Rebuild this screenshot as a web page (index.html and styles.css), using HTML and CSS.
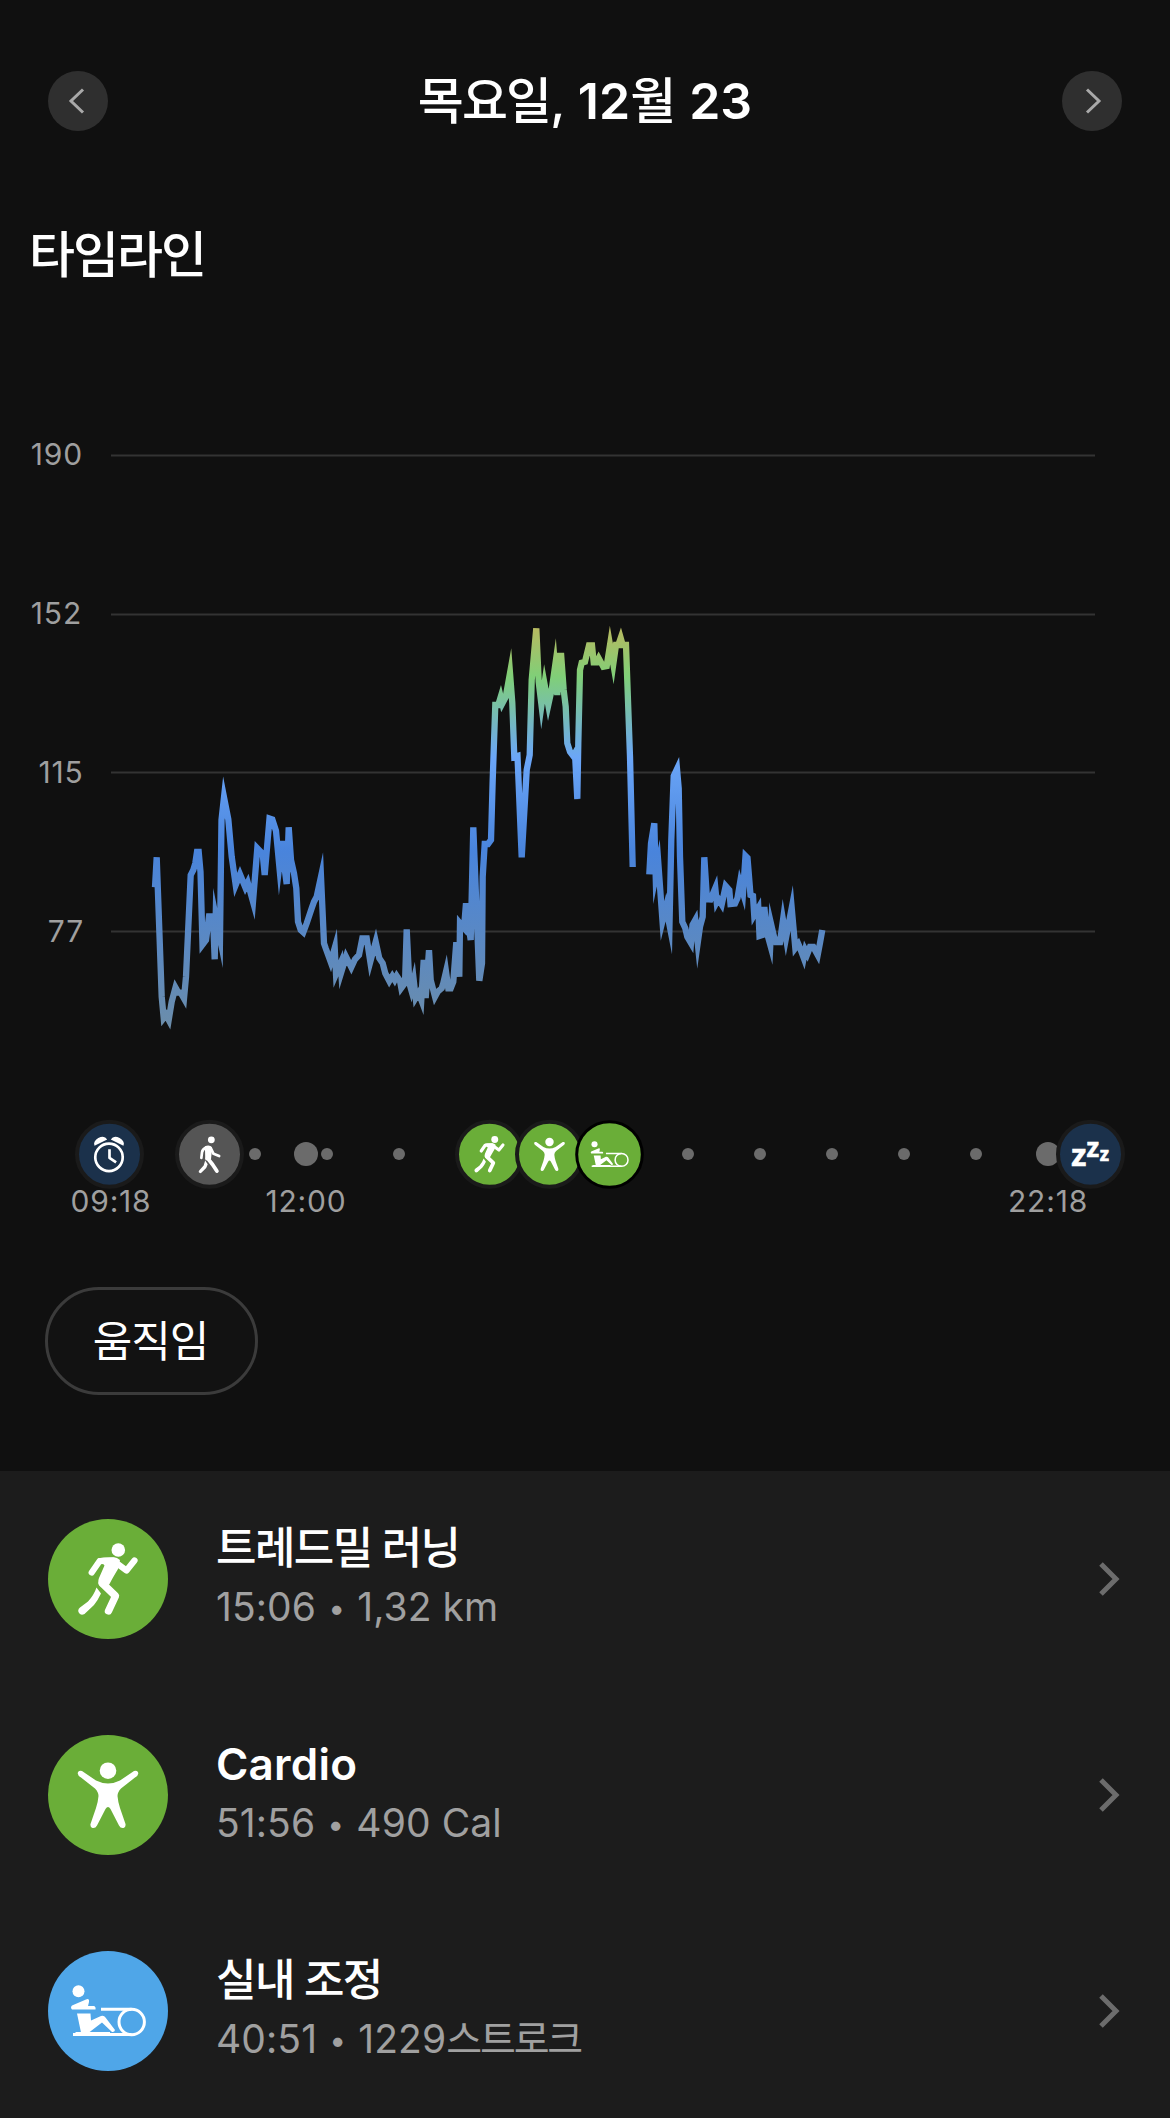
FILE: index.html
```html
<!DOCTYPE html>
<html lang="ko">
<head>
<meta charset="utf-8">
<meta name="viewport" content="width=device-width">
<title>타임라인</title>
<link rel="stylesheet" href="styles.css">
</head>
<body>
<svg class="sprite" aria-hidden="true">
  <symbol id="run" viewBox="0 0 120 120">
    <circle cx="70.3" cy="31" r="6.8"/>
    <path d="M50 39.5Q52 38.6 56 38.4L66 38.2Q69 38.4 72 41L70 50Q64 60 61.500 65Q57 71 52 67Q49 64 51 59L56.500 46.500Z"/>
    <path class="s6" d="M43.700 53.500L51.500 42.200L65 41.500L78.500 51.500L86.500 41.500"/>
    <path class="s7" d="M54.500 64.500L67.500 77L60.500 92"/>
    <path d="M48.500 68.500L53 74.500Q50 81 46 86L36.500 95Q33 97 31 94Q29 91 32 88.500L40 82.500Q46 76 48.500 68.500Z"/>
  </symbol>
  <symbol id="cardio" viewBox="0 0 120 120">
    <circle cx="60" cy="35.700" r="8.300"/>
    <path d="M34 36L48 45.500Q54 48.500 60 48.500Q66 48.500 72 45.500L86 36Q90 35 90.300 38.500Q90 41 87 42.500L73 53.500Q69.500 57 69.500 61Q70 67 72 73L77.500 89Q78 92 75.500 93Q72.500 93.500 71 90.500L62.500 74Q60 70 57.500 74L49 90.500Q47.500 93.500 44.500 93Q42 92 42.500 89L48 73Q50 67 50.500 61Q50.500 57 47 53.500L33 42.500Q30 41 29.700 38.500Q30 35 34 36Z"/>
  </symbol>
  <symbol id="row" viewBox="0 0 120 120">
    <circle cx="30.500" cy="40.300" r="6"/>
    <path d="M38 48.500Q41.500 47 41 51L40 55H46Q48 55.500 47.500 58.500H24Q22 56.500 24 54.500Z"/>
    <path d="M29 62.500H42.500L43 69.500L53 65Q56 64 57.500 66.500L67 79Q66.500 81.500 64 81L54 71.500L41 81.500H33Z"/>
    <path class="s3" d="M53 58.300H83.500M25 83.600H83.500"/>
    <path d="M28 81H62V84H25Z"/>
    <circle class="s3" cx="83.700" cy="71" r="12.700"/>
  </symbol>
  <symbol id="walk" viewBox="0 0 120 120">
    <circle cx="63.600" cy="31.500" r="6.700"/>
    <path d="M51 44.500Q56 41.500 62 43.500Q65 45 65 49L63 69L53 72Q50.500 69 51.500 64Z"/>
    <path class="s5" d="M53 46.500Q46 50 45.300 56L44 67M62.500 48L68 59L79 63.500"/>
    <path class="s7" d="M56.500 68L66 80L74.500 93"/>
    <path d="M51.500 72L56.500 79.500L53.500 87L44 96.500Q41 98 39 95.500Q38 93.500 40.500 91L48.500 82Z"/>
  </symbol>
  <symbol id="alarm" viewBox="0 0 120 120">
    <circle class="s5" cx="59" cy="66" r="27"/>
    <path class="s5 butt" d="M60 50V67L73 76"/>
    <path d="M30.500 43Q27 35 38 28Q50 22 55.500 31ZM87.500 43Q91 35 80 28Q68 22 62.500 31Z"/>
  </symbol>
</svg>

<main class="day">
  <header class="bar">
    <button class="nav" aria-label="이전"><svg viewBox="0 0 60 60"><path d="M35 18.500L23 30L35 41.500"/></svg></button>
    <h1 class="date">목요일, <span class="num">12</span>월 <span class="num">23</span></h1>
    <button class="nav" aria-label="다음"><svg viewBox="0 0 60 60"><path d="M25 18.500L37 30L25 41.500"/></svg></button>
  </header>

  <h2 class="heading">타임라인</h2>

  <svg class="chart" viewBox="0 400 1170 660">
    <defs>
      <linearGradient id="zones" gradientUnits="userSpaceOnUse" x1="0" y1="620" x2="0" y2="1025">
        <stop offset="0" stop-color="#c0b65c"/>
        <stop offset=".14" stop-color="#80cf78"/>
        <stop offset=".34" stop-color="#6ba6f8"/>
        <stop offset=".57" stop-color="#4984dc"/>
        <stop offset="1" stop-color="#6b8dab"/>
      </linearGradient>
    </defs>
    <path class="grid" d="M111 455.500H1095M111 614.500H1095M111 772.500H1095M111 931.500H1095"/>
    <g class="axis">
      <text x="83" y="465">190</text>
      <text x="82" y="624">152</text>
      <text x="83.500" y="783">115</text>
      <text x="84" y="942">77</text>
    </g>
    <path class="pulse" d="M155 887.3L156.700 857.300L161.700 996.700L163.700 1018L166 1015L168.700 1020L171.700 1001.700L175.500 987.500L178.300 992.500L180.700 992.700L184 998.500L186 976.700L190.700 875L193.300 870L195.300 863.300L197 852L198.700 852L200.500 872L202.500 944.700L206 940L209 916.500L213 916.500L214.700 959.300L215.700 916.500L220 938L221.500 820L224 797.300L228.300 819.300L231.700 856.700L235.700 885L240 874.300L245.300 887.300L247.700 882.500L253 901.700L257.300 848.300L262.700 854L264.700 875L269.500 818.500L272.300 819.500L276 831L279.300 866L282.300 841L284.300 866L286.700 884L288.700 827.300L291 860L294 873.300L296.300 888.300L298 921.700L300.700 930L303.300 932.300L306.700 923.300L311.700 908.300L314 901.700L316.700 896.700L321 876.700L324 943.300L325.700 948.300L330.700 962L334.700 948L336 974L340.700 963L341.300 972L346 956.700L351.300 967.300L355 959.300L359 955L362.300 938.300L366.700 938.300L370.300 961.700L375.700 941.700L379.300 958.300L382.700 963.300L385.300 973.300L389.300 981L392.300 976L394.700 980L396.700 976L400 981L401.300 988L405 983L406.700 929.300L409.300 983L411.300 990L413.700 980L415.700 998L418.700 993L421.300 1000L423.700 960L425.700 998L429 950.300L430.700 980L435 996.700L437.700 991.700L441.700 988.300L443.300 983.300L446 971.700L448.300 988.300L450.700 988.300L453.300 981.700L456.300 942.300L459.300 976.700L460 923.300L464 928L466 903.300L468.700 926L470.700 940L473.300 827.300L479.300 980.700L482 963.300L482.700 876.700L484.700 844L488 844L491 840L492.700 780L495.300 705L498.300 705L500.700 697L502.300 703.500L505.700 697L510 673L512.300 703L514.300 757L517.500 756L521.700 857.300L526.700 770L529.700 755L531.700 680L536.300 628.300L538.700 681.700L541.500 705L544.500 684L548.300 705L552 688L555 666.700L557.300 695L559.500 656L561.200 656L563.700 690L565.700 706.700L567.300 743.300L570 751.700L573.300 756L575 753L577.300 799L578.300 743L580 670L581.700 662.700L585 661.700L589 645.500L592 645.500L593.700 662.300L596.700 662.300L598.700 658.300L603.300 666.700L606.700 666L610 645L613.300 664L616 645L618.300 645L620.700 638L622.700 645L626 645L630 756.700L632.700 867M649.300 874.300L651 843.300L654.300 823.300L655.700 876L658.300 863L662.500 921L666 907L669.500 925L671.300 840L673.700 776L677 769L678.700 788.300L680 856.700L682.300 921.700L685.300 928.300L687.300 936.700L691 943L692.500 925L695.300 920L697.700 943L700 926.700L702.700 916.700L704.300 857.300L707 899.300L710.500 899.500L715.300 888L716.700 902L718.300 899L721.700 904.500L725.700 886L729.300 890L730.500 904L735 903.500L737.500 898L740 883L743 893L745.500 856L747.500 858L750.500 895L753 896L754.200 915L758.300 908L759.500 936L762.500 935L764.300 907L767 933L770.300 945L771.300 925L774 936.700L776 942L780 942L783 920L786 938L787.500 930L791.700 908L795.300 948L798.300 944L800 948L803.700 958L805.300 950L807.300 954L810 947L813.300 947L817.700 955L820 943L822.300 930"/>
  </svg>

  <svg class="track" viewBox="0 1110 1170 130">
    <g class="dots">
      <circle cx="255" cy="1154" r="6"/><circle cx="327" cy="1154" r="6"/><circle cx="399" cy="1154" r="6"/>
      <circle cx="688" cy="1154" r="6"/><circle cx="760" cy="1154" r="6"/><circle cx="832" cy="1154" r="6"/><circle cx="904" cy="1154" r="6"/><circle cx="976" cy="1154" r="6"/>
      <circle cx="306" cy="1154" r="12"/><circle cx="1048" cy="1154" r="12"/>
    </g>
    <g class="badge">
      <circle class="sleep" cx="109.500" cy="1154.300" r="32.500"/>
      <use href="#alarm" x="79" y="1123.800" width="61" height="61"/>
      <circle class="move" cx="209.500" cy="1154.300" r="32.500"/>
      <use href="#walk" x="179" y="1123.800" width="61" height="61"/>
      <circle class="sport" cx="489.500" cy="1154.300" r="32.500"/>
      <use href="#run" x="459" y="1123.800" width="61" height="61"/>
      <circle class="sport" cx="549.500" cy="1154.300" r="32.500"/>
      <use href="#cardio" x="519" y="1123.800" width="61" height="61"/>
      <circle class="sport current" cx="609.500" cy="1154.500" r="32.800"/>
      <use href="#row" x="579" y="1123.800" width="61" height="61"/>
      <circle class="sleep" cx="1090.500" cy="1154.300" r="32.500"/>
    </g>
    <g class="zzz">
      <text x="1071.300" y="1165.700" font-size="31">z</text>
      <text x="1086.600" y="1157.300" font-size="26">z</text>
      <text x="1099.800" y="1161" font-size="19">z</text>
    </g>
    <g class="hours">
      <text x="111" y="1212">09:18</text>
      <text x="306" y="1212">12:00</text>
      <text x="1048" y="1212">22:18</text>
    </g>
  </svg>

  <button class="chip">움직임</button>
</main>

<ul class="list">
  <li class="item">
    <svg class="icon green"><use href="#run"/></svg>
    <div class="text"><h3 class="name">트레드밀 러닝</h3><p class="info">15:06 <span class="sep">•</span> 1,32 km</p></div>
    <svg class="more" viewBox="0 0 24 36"><path d="M3 3L18 18L3 33"/></svg>
  </li>
  <li class="item">
    <svg class="icon green"><use href="#cardio"/></svg>
    <div class="text"><h3 class="name latin">Cardio</h3><p class="info">51:56 <span class="sep">•</span> 490 Cal</p></div>
    <svg class="more" viewBox="0 0 24 36"><path d="M3 3L18 18L3 33"/></svg>
  </li>
  <li class="item">
    <svg class="icon blue"><use href="#row"/></svg>
    <div class="text"><h3 class="name">실내 조정</h3><p class="info">40:51 <span class="sep">•</span> 1229<span class="unit">스트로크</span></p></div>
    <svg class="more" viewBox="0 0 24 36"><path d="M3 3L18 18L3 33"/></svg>
  </li>
</ul>
</body>
</html>
```
FILE: styles.css
```css
* { box-sizing: border-box; margin: 0; padding: 0; }
body {
  background: #101010;
  color: #fff;
  font-family: Inter, "Noto Sans CJK KR", sans-serif;
  height: 2118px;
  display: flex;
  flex-direction: column;
  overflow: hidden;
}
svg { display: block; fill: #fff; }
.sprite { width: 0; height: 0; position: absolute; }
button { border: 0; color: inherit; font: inherit; }

.s3, .s5, .s6, .s7 { fill: none; stroke: #fff; stroke-linecap: round; stroke-linejoin: round; }
.s3 { stroke-width: 3; stroke-linecap: butt; }
.s5 { stroke-width: 5.3; }
.s6 { stroke-width: 6.2; }
.s7 { stroke-width: 7.4; }
.butt { stroke-linecap: butt; }

.day { flex: 0 0 1471px; display: flex; flex-direction: column; align-items: flex-start; }
.bar {
  width: 100%;
  padding: 71px 48px 0;
  display: flex;
  align-items: center;
  justify-content: space-between;
}
.nav { width: 60px; height: 60px; border-radius: 50%; background: #2f2f2f; }
.nav path { fill: none; stroke: #a9a9a9; stroke-width: 3; }
.date { font-size: 50px; font-weight: 500; line-height: 60px; letter-spacing: -1.9px; word-spacing: 3.5px; }
.num { font-weight: 600; letter-spacing: 0; }
.heading {
  margin: 94px 0 0 29px;
  font-size: 50px;
  line-height: 60px;
  font-weight: 500;
  letter-spacing: -2px;
}
.chart { width: 1170px; height: 660px; margin-top: 115px; }
.grid { stroke: #333; stroke-width: 2; }
.axis, .hours { fill: #9f9f9f; font-size: 30px; text-anchor: end; letter-spacing: .8px; }
.hours { text-anchor: middle; }
.pulse { fill: none; stroke: url(#zones); stroke-width: 6.3; stroke-linejoin: miter; stroke-miterlimit: 10; }

.track { width: 1170px; height: 130px; margin-top: 50px; }
.dots { fill: #6b6b6b; }
.badge > circle { stroke: #1a1a1a; stroke-width: 4; }
.badge > .sleep { fill: #1b314b; }
.badge > .move { fill: #555; }
.badge > .sport { fill: #6aae38; }
.badge > .current { stroke: #000; stroke-width: 3; }
.zzz { font-family: "Open Sans", sans-serif; font-weight: 700; stroke: #fff; stroke-width: .6; }

.chip {
  width: 213px;
  height: 108px;
  margin: 47px 0 0 45px;
  padding: 0 2px 6px 0;
  border: 3px solid #3b3b3b;
  border-radius: 54px;
  background: #121212;
  font-size: 43px;
  letter-spacing: -1px;
}

.list { flex: 1; list-style: none; background: #1c1c1c; padding-top: 48px; }
.item {
  height: 120px;
  margin-bottom: 96px;
  padding: 0 48px;
  display: flex;
  align-items: center;
}
.icon { width: 120px; height: 120px; border-radius: 50%; }
.green { background: #6aae38; }
.blue { background: #4fa6e8; }
.text { flex: 1; padding: 0 0 5px 48px; }
.name { font-size: 44px; line-height: 60px; font-weight: 500; letter-spacing: -1.6px; }
.latin { font-weight: 600; letter-spacing: .2px; }
.info { font-size: 39px; line-height: 58px; color: #a0a0a0; letter-spacing: .1px; }
.sep { font-size: 30px; margin: 0 1px; vertical-align: 1.5px; line-height: 1; }
.unit { letter-spacing: -2.2px; }
.more { width: 24px; height: 36px; }
.more path { fill: none; stroke: #6c6c6c; stroke-width: 5; }
```
